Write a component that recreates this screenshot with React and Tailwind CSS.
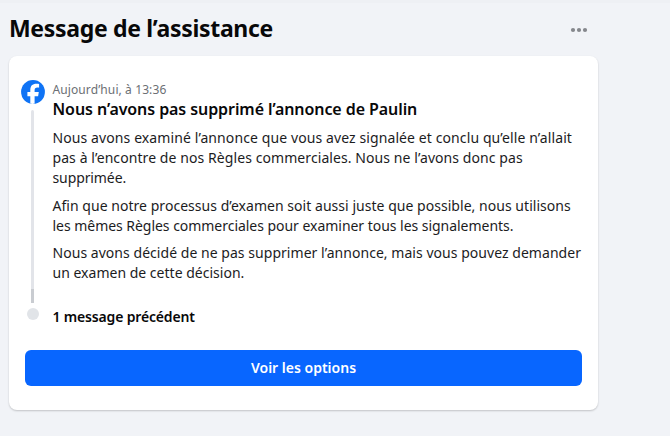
const paragraphs = [
  [
    { text: 'Nous avons examiné l’annonce que vous avez signalée et conclu qu’elle n’allait', tracking: 'tracking-[0.1px]' },
    { text: 'pas à l’encontre de nos Règles commerciales. Nous ne l’avons donc pas', tracking: 'tracking-[0.08px]' },
    { text: 'supprimée.', tracking: 'tracking-[-0.1px]' },
  ],
  [
    { text: 'Afin que notre processus d’examen soit aussi juste que possible, nous utilisons', tracking: 'tracking-[0.035px]' },
    { text: 'les mêmes Règles commerciales pour examiner tous les signalements.', tracking: 'tracking-[-0.035px]' },
  ],
  [
    { text: 'Nous avons décidé de ne pas supprimer l’annonce, mais vous pouvez demander', tracking: 'tracking-[0.04px]' },
    { text: 'un examen de cette décision.', tracking: 'tracking-[0.01px]' },
  ],
];

function FacebookLogo() {
  return (
    <svg viewBox="0 0 24 24" className="h-6 w-6 shrink-0" aria-hidden="true">
      <circle cx="12" cy="12" r="11.9" fill="#0f73f5" />
      <path
        fill="#fff"
        d="M9.3 23.8V16.2H6.4V12.1h2.9v-1.8c0-4.5 2-6.6 6.3-6.6.8 0 1.9.1 2.5.3v3.7c-.4-.1-.9-.1-1.6-.1-2.1 0-2.9.8-2.9 2.9v1.6h4.2l-.7 4.1h-3.5v7.6c-1.4.2-2.9.2-4.3 0Z"
      />
    </svg>
  );
}

function MoreIcon() {
  return (
    <svg viewBox="0 0 18 6" className="h-1.5 w-[18px]" fill="#85878c" aria-hidden="true">
      <circle cx="3" cy="3" r="2.1" />
      <circle cx="9" cy="3" r="2.1" />
      <circle cx="15" cy="3" r="2.1" />
    </svg>
  );
}

export default function App() {
  return (
    <div className="h-[436px] w-[670px] overflow-hidden border-t-[3px] border-[#eef0f4] bg-[#f1f3f7] font-['Noto_Sans','Open_Sans',sans-serif] text-[#080809]">
      {/* Header */}
      <header className="flex h-[53px] w-[598px] items-center justify-between pb-[3px] pl-[9px] pr-[10.5px]">
        <h1 className="whitespace-nowrap text-[23px] font-bold tracking-[-0.32px]">Message de l’assistance</h1>
        <button type="button" aria-label="Plus" className="pt-1">
          <MoreIcon />
        </button>
      </header>

      <main className="ml-[9px] flex h-[353.5px] w-[589px] flex-col rounded-lg bg-white pt-6 shadow-[0_1px_2px_rgba(0,0,0,0.2)]">
        <div className="flex">
          {/* Timeline */}
          <div className="ml-[11.5px] flex w-6 shrink-0 flex-col items-center">
            <FacebookLogo />
            <div className="mt-1.5 flex h-[193px] w-[3px] flex-col justify-end rounded-sm bg-[#e2e4e9]">
              <div className="h-3.5 bg-[#c9ccd1]" />
            </div>
            <div className="mt-[5px] h-3 w-3 rounded-full bg-[#e1e4e8]" />
          </div>

          <article className="ml-2">
            <p className="mt-px text-xs leading-[18px] tracking-[0.1px] text-[#6c6f74]">Aujourd’hui, à 13:36</p>
            <h2 className="text-base leading-5 font-semibold tracking-[-0.08px]">
              Nous n’avons pas supprimé l’annonce de Paulin
            </h2>
            <div className="mt-[9px] space-y-[7.5px] text-sm leading-5 text-[#1c1c1e]">
              {paragraphs.map((lines) => (
                <p key={lines[0].text}>
                  {lines.map((line) => (
                    <span key={line.text} className={`block whitespace-nowrap ${line.tracking}`}>
                      {line.text}
                    </span>
                  ))}
                </p>
              ))}
            </div>
            <p className="mt-6 text-sm leading-5 font-semibold tracking-[-0.17px]">1 message précédent</p>
          </article>
        </div>

        <button
          type="button"
          className="mx-4 mt-auto mb-6 h-9 rounded-md bg-[#0866ff] text-sm font-semibold text-white"
        >
          Voir les options
        </button>
      </main>
    </div>
  );
}
